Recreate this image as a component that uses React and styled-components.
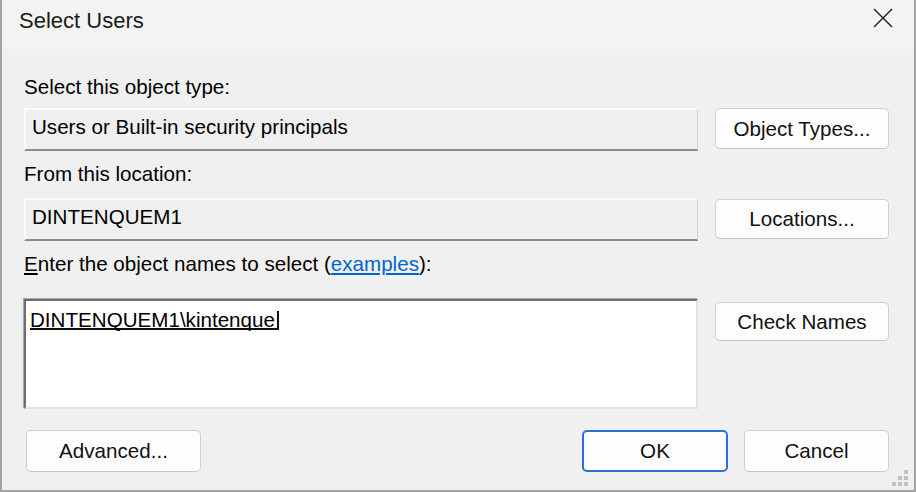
import React from 'react';
import styled, { createGlobalStyle } from 'styled-components';

const GlobalStyle = createGlobalStyle`
  html, body {
    margin: 0;
    padding: 0;
    background: #f0f0f0;
  }
  body {
    font-family: "Liberation Sans", Arial, sans-serif;
  }
`;

const Window = styled.div`
  position: relative;
  width: 916px;
  height: 492px;
  box-sizing: border-box;
  border: 2px solid #a3a3a3;
  border-top: none;
  background: #f0f0f0;
  color: #000;
  display: flex;
  flex-direction: column;
  overflow: hidden;
`;

const TitleBar = styled.div`
  flex: none;
  height: 49px;
  box-sizing: border-box;
  padding: 8px 21px 0 17px;
  background: #f3f3f3;
  display: flex;
  align-items: flex-start;
  justify-content: space-between;
`;

const Title = styled.div`
  font-size: 22px;
  line-height: 25px;
  color: #1a1a1a;
`;

const CloseButton = styled.div`
  width: 20px;
  height: 20px;
  display: flex;
`;

const Body = styled.div`
  padding: 26px 25px 0 22px;
  display: flex;
  flex-direction: column;
`;

const Label = styled.div`
  font-size: 20.6px;
  line-height: 24px;
  margin-top: ${(p) => p.$top || 0}px;
  margin-bottom: ${(p) => p.$bottom || 0}px;
  white-space: nowrap;
`;

const Link = styled.span`
  color: #0066cc;
  text-decoration: underline;
`;

const Row = styled.div`
  display: grid;
  grid-template-columns: 674px 174px;
  column-gap: 17px;
  align-items: start;
`;

const ReadOnlyField = styled.div`
  height: 43px;
  box-sizing: border-box;
  padding: 5px 6px 0;
  background: #efefef;
  border-top: 2px solid #fbfbfb;
  border-left: 2px solid #fbfbfb;
  border-right: 1px solid #d6d6d6;
  border-bottom: 2px solid #8c8c8c;
  font-size: 20.6px;
  line-height: 24px;
  white-space: nowrap;
`;

const NamesBox = styled.div`
  height: 110px;
  box-sizing: border-box;
  padding: 10px 4px 0;
  background: #fff;
  border-top: 2px solid #6f6f6f;
  border-left: 2px solid #6f6f6f;
  border-right: 2px solid #e2e2e2;
  border-bottom: 2px solid #e2e2e2;
  box-shadow: -1px -1px 0 #a8a8a8;
  font-size: 20.6px;
  line-height: 17px;
`;

const Typed = styled.span`
  display: inline-block;
  line-height: 17px;
  padding-right: 2px;
  border-bottom: 2px solid #111;
  border-right: 2px solid #111;
  white-space: nowrap;
`;

const Button = styled.button`
  width: ${(p) => (p.$w ? `${p.$w}px` : '100%')};
  height: ${(p) => p.$h || 41}px;
  margin-top: ${(p) => p.$top || 0}px;
  box-sizing: border-box;
  padding: 0;
  background: #fdfdfd;
  border: ${(p) => (p.$primary ? '2px solid #2f6fca' : '1px solid #d0d0d0')};
  border-bottom-color: ${(p) => (p.$primary ? '#2f6fca' : '#c4c4c4')};
  border-radius: 5px;
  font-family: "Liberation Sans", Arial, sans-serif;
  font-size: 20.6px;
  color: #111;
  cursor: default;
`;

const Footer = styled.div`
  margin-top: 21px;
  padding-left: 2px;
  display: flex;
  justify-content: space-between;
`;

const ButtonGroup = styled.div`
  display: flex;
  gap: 16px;
`;

const Grip = styled.svg`
  position: absolute;
  right: 6px;
  bottom: 4px;
`;

const App = () => (
  <>
    <GlobalStyle />
    <Window>
      <TitleBar>
        <Title>Select Users</Title>
        <CloseButton>
          <svg width="20" height="20" viewBox="0 0 20 20">
            <path d="M1 1 L19 19 M19 1 L1 19" stroke="#1a1a1a" strokeWidth="1.4" fill="none" />
          </svg>
        </CloseButton>
      </TitleBar>
      <Body>
        <Label $bottom={9}>Select this object type:</Label>
        <Row>
          <ReadOnlyField>Users or Built-in security principals</ReadOnlyField>
          <Button>Object Types...</Button>
        </Row>

        <Label $top={11} $bottom={12}>From this location:</Label>
        <Row>
          <ReadOnlyField>DINTENQUEM1</ReadOnlyField>
          <Button $top={1} $h={40}>Locations...</Button>
        </Row>

        <Label $top={11} $bottom={23}>
          <u>E</u>nter the object names to select (<Link>examples</Link>):
        </Label>
        <Row>
          <NamesBox>
            <Typed>DINTENQUEM1\kintenque</Typed>
          </NamesBox>
          <Button $top={3} $h={39}>Check Names</Button>
        </Row>

        <Footer>
          <Button $w={175} $h={42}>Advanced...</Button>
          <ButtonGroup>
            <Button $w={146} $h={42} $primary>OK</Button>
            <Button $w={145} $h={42}>Cancel</Button>
          </ButtonGroup>
        </Footer>
      </Body>
      <Grip width="16" height="16" viewBox="0 0 16 16">
        <rect x="12" y="0" width="4" height="4" fill="#c2c2c2" />
        <rect x="6" y="6" width="4" height="4" fill="#c2c2c2" />
        <rect x="12" y="6" width="4" height="4" fill="#c2c2c2" />
        <rect x="0" y="12" width="4" height="4" fill="#c2c2c2" />
        <rect x="6" y="12" width="4" height="4" fill="#c2c2c2" />
        <rect x="12" y="12" width="4" height="4" fill="#c2c2c2" />
      </Grip>
    </Window>
  </>
);

export default App;
